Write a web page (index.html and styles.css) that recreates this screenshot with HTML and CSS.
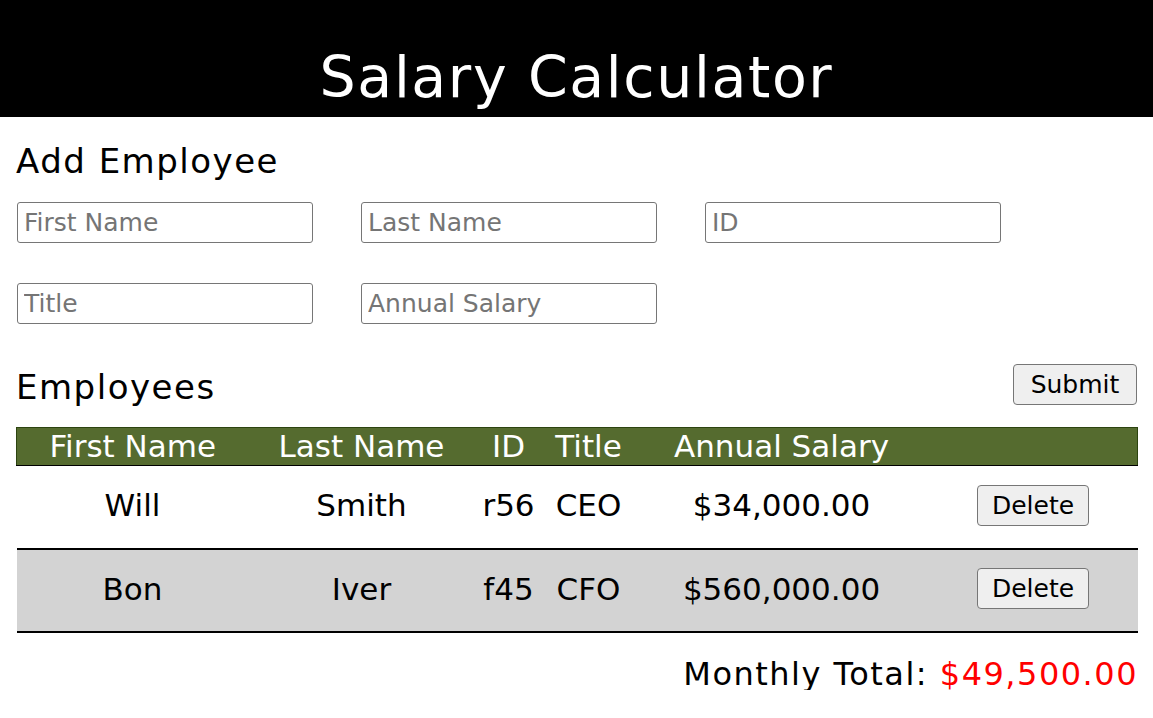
FILE: index.html
```html
<!DOCTYPE html>
<html lang="en">
<head>
<meta charset="utf-8">
<title>Salary Calculator</title>
<link rel="stylesheet" href="styles.css">
</head>
<body>
<header class="banner">
  <h1 class="banner-title">Salary Calculator</h1>
</header>
<main class="page">
  <h2 class="section-title add-title">Add Employee</h2>
  <form class="employee-form">
    <input class="field" type="text" placeholder="First Name">
    <input class="field" type="text" placeholder="Last Name">
    <input class="field" type="text" placeholder="ID">
    <input class="field" type="text" placeholder="Title">
    <input class="field" type="text" placeholder="Annual Salary">
  </form>
  <div class="list-head">
    <h2 class="section-title list-title">Employees</h2>
    <button class="btn btn-submit" type="button">Submit</button>
  </div>
  <table class="employees">
    <thead>
      <tr>
        <th class="col-first">First Name</th>
        <th class="col-last">Last Name</th>
        <th class="col-id">ID</th>
        <th class="col-title">Title</th>
        <th class="col-salary">Annual Salary</th>
        <th class="col-action"></th>
      </tr>
    </thead>
    <tbody>
      <tr>
        <td>Will</td>
        <td>Smith</td>
        <td>r56</td>
        <td>CEO</td>
        <td>$34,000.00</td>
        <td><button class="btn btn-delete" type="button">Delete</button></td>
      </tr>
      <tr class="row-alt">
        <td>Bon</td>
        <td>Iver</td>
        <td>f45</td>
        <td>CFO</td>
        <td>$560,000.00</td>
        <td><button class="btn btn-delete" type="button">Delete</button></td>
      </tr>
    </tbody>
  </table>
  <p class="total">Monthly Total: <span class="total-amount">$49,500.00</span></p>
</main>
</body>
</html>
```

FILE: styles.css
```css
* {
  box-sizing: border-box;
}

body {
  margin: 0;
  background: #fff;
  color: #000;
  font-family: "DejaVu Sans", "Noto Sans", sans-serif;
}

.banner {
  height: 117px;
  padding-top: 49px;
  background: #000;
  text-align: center;
  overflow: hidden;
}

.banner-title {
  margin: 0;
  color: #fff;
  font-size: 57px;
  font-weight: normal;
  line-height: 57px;
  letter-spacing: 1.6px;
}

.page {
  padding: 0 16px;
}

.section-title {
  margin: 0;
  font-size: 34px;
  font-weight: normal;
  line-height: 34px;
  letter-spacing: 1.5px;
}

.add-title {
  margin-top: 27px;
}

.employee-form {
  display: grid;
  grid-template-columns: repeat(3, 296px);
  column-gap: 48px;
  row-gap: 40px;
  margin: 24px 0 0;
  padding-left: 1px;
}

.field {
  height: 41px;
  margin: 0;
  padding: 0 6px;
  border: 1px solid #767676;
  border-radius: 3px;
  font-family: inherit;
  font-size: 25px;
  color: #000;
  background: #fff;
}

.field::placeholder {
  color: #757575;
}

.list-head {
  display: flex;
  justify-content: space-between;
  align-items: center;
  margin-top: 40px;
}

.list-title {
  margin-top: 4px;
}

.btn {
  height: 41px;
  margin: 0;
  padding: 0;
  border: 1px solid #767676;
  border-radius: 4px;
  background: #efefef;
  color: #000;
  font-family: inherit;
  font-size: 25px;
}

.btn-submit {
  width: 124px;
}

.btn-delete {
  width: 112px;
  vertical-align: middle;
}

.employees {
  width: 100%;
  margin-top: 22px;
  border-collapse: collapse;
  table-layout: fixed;
  font-size: 31px;
}

.employees thead tr {
  background: #556b2f;
  border: 1px solid #2c4410;
  border-bottom-color: #000;
}

.employees th {
  height: 38px;
  padding: 0;
  color: #fff;
  font-weight: normal;
  line-height: 37px;
  text-align: center;
}

.col-first { width: 232px; }
.col-last { width: 226px; }
.col-id { width: 68px; }
.col-title { width: 92px; }
.col-salary { width: 294px; }
.col-action { width: 209px; }

.employees tbody tr {
  border-bottom: 2px solid #000;
}

.employees td {
  height: 83px;
  padding: 0 0 3px;
  text-align: center;
  vertical-align: middle;
  white-space: nowrap;
}

.row-alt {
  background: #d3d3d3;
}

.total {
  margin: 25px -1px 0 0;
  font-size: 32px;
  line-height: 32px;
  letter-spacing: 1.5px;
  text-align: right;
}

.total-amount {
  color: #ff0000;
}
```
